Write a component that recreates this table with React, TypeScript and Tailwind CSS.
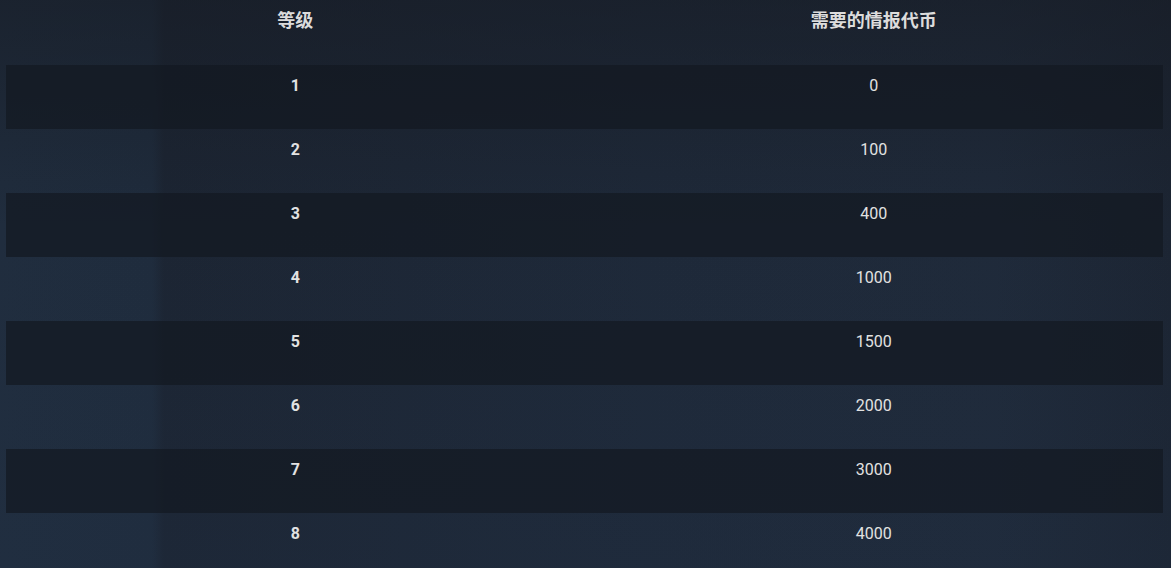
const rows: [number, number][] = [
  [1, 0],
  [2, 100],
  [3, 400],
  [4, 1000],
  [5, 1500],
  [6, 2000],
  [7, 3000],
  [8, 4000],
];

export default function App() {
  return (
    <div
      className="relative h-[568px] w-[1171px] overflow-hidden bg-[#1e2a3a]"
      style={{ fontFamily: 'Roboto, "Noto Sans CJK SC", sans-serif' }}
    >
      {/* backdrop */}
      <div className="absolute inset-0 bg-[linear-gradient(90deg,#202d3e_0%,#1f2c3d_13%,#1c2533_14%,#1e2939_55%,#1f2a3a_85%,#1c2533_100%)]" />
      <div className="absolute inset-0 bg-[linear-gradient(180deg,rgba(22,26,34,0.55)_0%,rgba(22,26,34,0)_40%,rgba(34,50,72,0.2)_100%)]" />

      <div className="relative pl-[6px] pr-[8px]">
        <div className="grid h-[65px] grid-cols-2 text-[18px] font-bold text-[#dcdcdc]">
          <div className="pt-[7px] text-center">等级</div>
          <div className="pt-[7px] text-center">需要的情报代币</div>
        </div>
        {rows.map(([lv, cost], i) => (
          <div
            key={lv}
            className={`grid h-[64px] grid-cols-2 text-[16px] text-[#e2e2e2] ${
              i % 2 === 0 ? "bg-[#121821]/70" : ""
            }`}
          >
            <div className="pt-[9px] text-center font-bold">{lv}</div>
            <div className="pt-[9px] text-center">{cost}</div>
          </div>
        ))}
      </div>
    </div>
  );
}
